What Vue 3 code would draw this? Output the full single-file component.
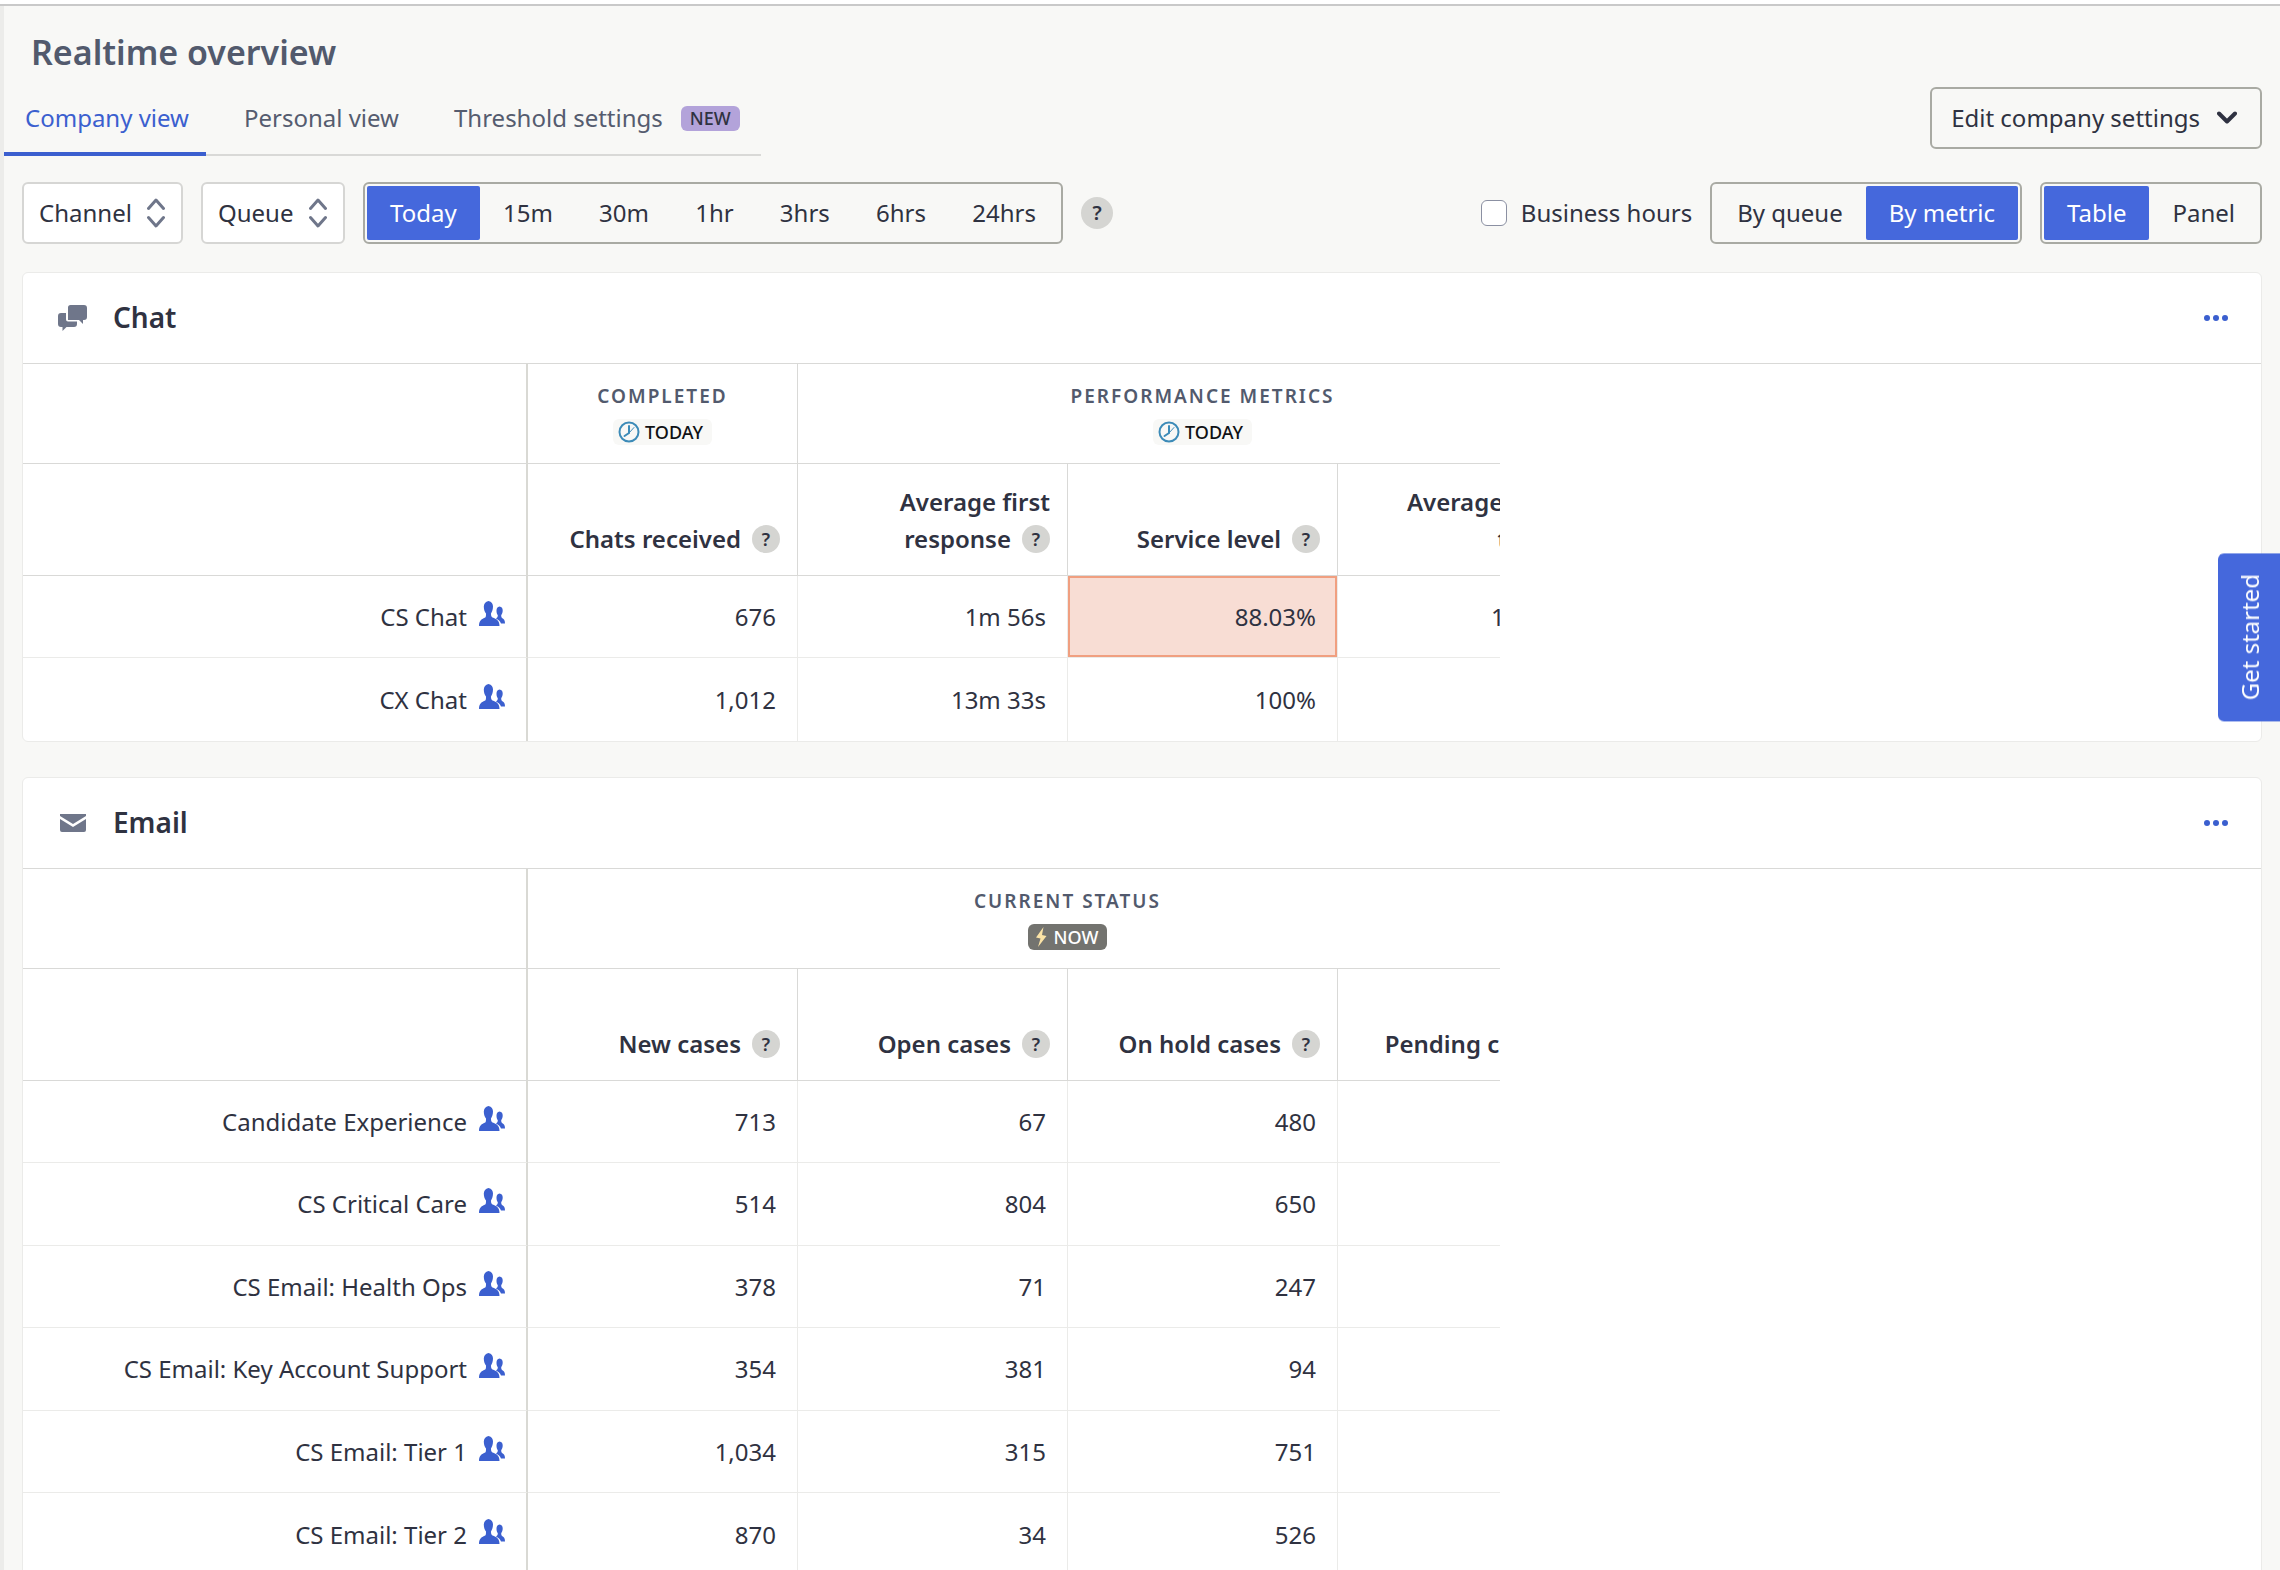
<script setup>
import { ref } from 'vue'

const tab = ref('company')
const ranges = ['Today', '15m', '30m', '1hr', '3hrs', '6hrs', '24hrs']
const range = ref('Today')
const grouping = ref('By metric')
const layout = ref('Table')
const businessHours = ref(false)

const sections = [
  {
    title: 'Chat',
    icon: 'chat',
    groups: [
      { label: 'Completed', span: 1, period: 'today' },
      { label: 'Performance metrics', span: 3, period: 'today' },
    ],
    metrics: ['Chats received', 'Average first response', 'Service level', 'Average handle time'],
    rows: [
      { queue: 'CS Chat', values: ['676', '1m 56s', '88.03%', '12m 24s'], alert: 2 },
      { queue: 'CX Chat', values: ['1,012', '13m 33s', '100%', ''] },
    ],
  },
  {
    title: 'Email',
    icon: 'email',
    groups: [{ label: 'Current status', span: 4, period: 'now' }],
    metrics: ['New cases', 'Open cases', 'On hold cases', 'Pending cases'],
    rows: [
      { queue: 'Candidate Experience', values: ['713', '67', '480', ''] },
      { queue: 'CS Critical Care', values: ['514', '804', '650', ''] },
      { queue: 'CS Email: Health Ops', values: ['378', '71', '247', ''] },
      { queue: 'CS Email: Key Account Support', values: ['354', '381', '94', ''] },
      { queue: 'CS Email: Tier 1', values: ['1,034', '315', '751', ''] },
      { queue: 'CS Email: Tier 2', values: ['870', '34', '526', ''] },
    ],
  },
]

const leadingWords = (text) => text.split(' ').slice(0, -1).join(' ')
const lastWord = (text) => text.split(' ').pop()
</script>

<template>
  <div class="app">
    <div class="topbar"></div>
    <main class="page">
      <header class="head">
        <div class="head-left">
          <h1>Realtime overview</h1>
          <nav class="tabs">
            <a href="#company" :class="{ active: tab === 'company' }" @click.prevent="tab = 'company'">Company view</a>
            <a href="#personal" :class="{ active: tab === 'personal' }" @click.prevent="tab = 'personal'">Personal view</a>
            <a href="#threshold" :class="{ active: tab === 'threshold' }" @click.prevent="tab = 'threshold'">Threshold settings <span class="new">NEW</span></a>
          </nav>
        </div>
        <button type="button" class="edit">
          Edit company settings
          <svg width="20" height="14" viewBox="0 0 20 14" aria-hidden="true"><path d="M2 2.5l8 8 8-8" fill="none" stroke="#2f3241" stroke-width="4" stroke-linecap="round" stroke-linejoin="round" /></svg>
        </button>
      </header>

      <div class="toolbar">
        <div v-for="name in ['Channel', 'Queue']" :key="name" class="picker">
          <select :aria-label="name"><option>{{ name }}</option></select>
          <svg width="18" height="30" viewBox="0 0 18 30" aria-hidden="true"><path d="M1.500 10.500L9 2l7.500 8.500M1.500 19.500L9 28l7.500-8.500" fill="none" stroke="#6f768a" stroke-width="3" stroke-linecap="round" stroke-linejoin="round" /></svg>
        </div>
        <div class="segment ranges" role="group" aria-label="Time range">
          <button v-for="r in ranges" :key="r" type="button" :class="{ on: range === r }" :aria-pressed="range === r" @click="range = r">{{ r }}</button>
        </div>
        <button type="button" class="help large" aria-label="About time ranges">?</button>
        <label class="hours"><input v-model="businessHours" type="checkbox" />Business hours</label>
        <div class="segment" role="group" aria-label="Grouping">
          <button v-for="g in ['By queue', 'By metric']" :key="g" type="button" :class="{ on: grouping === g }" :aria-pressed="grouping === g" @click="grouping = g">{{ g }}</button>
        </div>
        <div class="segment" role="group" aria-label="Layout">
          <button v-for="l in ['Table', 'Panel']" :key="l" type="button" :class="{ on: layout === l }" :aria-pressed="layout === l" @click="layout = l">{{ l }}</button>
        </div>
      </div>

      <section v-for="s in sections" :key="s.title" class="card">
        <div class="card-head">
          <svg v-if="s.icon === 'chat'" width="30" height="26" viewBox="0 0 30 26" aria-hidden="true">
            <path d="M3 8h5v6.500a2 2 0 0 0 2 2h9v2.500a3 3 0 0 1-3 3H8.500L4.500 26v-4H3a3 3 0 0 1-3-3v-8a3 3 0 0 1 3-3z" fill="#6f768a" />
            <path d="M12.500 0h13.500a3 3 0 0 1 3 3v9a3 3 0 0 1-3 3h-1v4l-4-4H10V2.500a2.500 2.500 0 0 1 2.500-2.500z" fill="#6f768a" />
          </svg>
          <svg v-else width="30" height="26" viewBox="0 0 30 26" aria-hidden="true">
            <path d="M2 4h26v2l-13 8L2 6z" fill="#6f768a" />
            <path d="M2 9l13 8 13-8v11a2 2 0 0 1-2 2H4a2 2 0 0 1-2-2z" fill="#6f768a" />
          </svg>
          <h2>{{ s.title }}</h2>
          <button type="button" class="more" :aria-label="s.title + ' options'">
            <svg width="24" height="6" viewBox="0 0 24 6" aria-hidden="true"><g fill="#3b5fcf"><circle cx="3" cy="3" r="3" /><circle cx="12" cy="3" r="3" /><circle cx="21" cy="3" r="3" /></g></svg>
          </button>
        </div>
        <div class="scroller">
          <table>
            <colgroup>
              <col class="col-queue" />
              <col v-for="m in s.metrics" :key="m" class="col-metric" />
            </colgroup>
            <thead>
              <tr class="groups">
                <td></td>
                <th v-for="g in s.groups" :key="g.label" :colspan="g.span" scope="colgroup">
                  <div class="group">
                    <span class="group-label">{{ g.label }}</span>
                    <span v-if="g.period === 'today'" class="period today">
                      <svg width="22" height="22" viewBox="0 0 22 22" aria-hidden="true"><g fill="none" stroke="#3d8bb8" stroke-linecap="round"><circle cx="11" cy="11" r="9.500" stroke-width="2" /><path d="M11 5v7l-4.500 3" stroke-width="2" /><path d="M11 12l5-5.500" stroke-width="1" /></g></svg>
                      TODAY
                    </span>
                    <span v-else class="period now">
                      <svg width="12" height="20" viewBox="0 0 12 20" aria-hidden="true"><path d="M8.500 0L1 10.500l4.500 1L3 20l8.500-11L7 8z" fill="#fbe3a6" /></svg>
                      NOW
                    </span>
                  </div>
                </th>
              </tr>
              <tr class="metrics">
                <td></td>
                <th v-for="m in s.metrics" :key="m" scope="col">
                  {{ leadingWords(m) }}
                  <span class="tail">{{ lastWord(m) }}<button type="button" class="help" :aria-label="'About ' + m">?</button></span>
                </th>
              </tr>
            </thead>
            <tbody>
              <tr v-for="row in s.rows" :key="row.queue">
                <th scope="row">
                  <div class="queue">
                    {{ row.queue }}
                    <svg width="26" height="26" viewBox="0 0 26 26" aria-hidden="true">
                      <path d="M9.500 0c3.200.8 4.500 3 4.500 5.500 0 3.500-1.200 5.500-2 7 0 2 .2 3 1.500 4 4 1.500 7 2.800 7 8.500H0c0-5.700 2.800-7 6.300-8.500C7 15.500 7 14.500 7 12.500c-1.200-1.500-2.200-3.500-2.200-7C4.800 3 6.500.8 9.500 0z" fill="#3b5fcf" />
                      <path d="M20.500 5.500c2.300.3 3.200 2 3.200 4 0 2.200-.8 3.500-1.500 4.700 0 1.500.3 2.300 1.200 3 1.600 1 2.600 2 2.600 5.300h-4c-1-2.700-2.600-3.800-5-5 1.300-.8 1.800-1.600 1.800-3.200-.9-1.200-1.300-2.600-1.300-4.800 0-2 1-3.700 3-4z" fill="#3b5fcf" />
                    </svg>
                  </div>
                </th>
                <td v-for="(v, i) in row.values" :key="i" :class="{ alert: row.alert === i }">{{ v }}</td>
              </tr>
            </tbody>
          </table>
        </div>
      </section>
    </main>
    <button type="button" class="started">Get started</button>
  </div>
</template>

<style>
body {
  background: #f8f8f6;
}
</style>

<style scoped>
.app {
  display: flex;
  flex-direction: column;
  height: 100vh;
  overflow: hidden;
  font-family: "Noto Sans", "Open Sans", sans-serif;
  font-size: 24px;
  line-height: 36px;
  color: #2f3241;
}
.app * {
  box-sizing: border-box;
}
button,
select {
  margin: 0;
  padding: 0;
  border: 0;
  background: none;
  font: inherit;
  color: inherit;
}
svg {
  display: block;
  flex: none;
}
.topbar {
  flex: none;
  height: 6px;
  background: #fff;
  border-bottom: 2px solid #c9c9c9;
}
.page {
  flex: 1;
  border-left: 4px solid #ececea;
}
.head {
  display: flex;
  justify-content: space-between;
  align-items: flex-end;
  padding-right: 18px;
}
h1 {
  margin: 0;
  padding: 22px 0 0 27px;
  font-size: 34px;
  line-height: 48px;
  font-weight: 600;
  color: #525a6d;
}
.tabs {
  display: flex;
  margin-top: 18px;
  padding-right: 4px;
  height: 62px;
  box-shadow: inset 0 -2px #d9d9d7;
}
.tabs a {
  display: flex;
  align-items: center;
  padding: 0 17px 10px 21px;
  margin-right: 17px;
  text-decoration: none;
  color: #555c6f;
  border-bottom: 4px solid transparent;
}
.tabs a:last-child {
  margin-right: 0;
}
.tabs a.active {
  color: #3b5fcf;
  border-color: #3b5fcf;
}
.new {
  margin-left: 18px;
  padding: 0 9px;
  border-radius: 6px;
  background: #b3a3da;
  font-size: 18px;
  line-height: 25px;
  font-weight: 500;
  color: #2f3241;
}
.edit {
  display: flex;
  align-items: center;
  gap: 17px;
  height: 62px;
  margin-bottom: 7px;
  padding: 0 23px 0 19px;
  border: 2px solid #a9aaa3;
  border-radius: 6px;
}
.toolbar {
  display: flex;
  align-items: center;
  gap: 18px;
  padding: 26px 18px 28px;
}
.picker {
  display: grid;
  align-items: center;
  justify-items: end;
}
.picker select {
  grid-area: 1 / 1;
  appearance: none;
  height: 62px;
  padding: 0 49px 0 15px;
  border: 2px solid #d6d6d4;
  border-radius: 6px;
  background: #fff;
}
.picker svg {
  grid-area: 1 / 1;
  margin-right: 18px;
  pointer-events: none;
}
.segment {
  display: flex;
  height: 62px;
  padding: 2px;
  border: 2px solid #a9aaa3;
  border-radius: 6px;
}
.segment button {
  flex: 1 1 auto;
  padding: 0 23px;
  border-radius: 2px;
}
.segment button.on {
  background: #4568dc;
  color: #fff;
}
.ranges {
  width: 700px;
}
.help {
  width: 28px;
  height: 28px;
  border-radius: 50%;
  background: #d5d5d2;
  font-size: 18px;
  line-height: 28px;
  font-weight: 600;
  text-align: center;
}
.help.large {
  width: 32px;
  height: 32px;
  font-size: 20px;
  line-height: 32px;
}
.hours {
  display: flex;
  align-items: center;
  gap: 14px;
  margin-left: auto;
}
.hours input {
  appearance: none;
  width: 26px;
  height: 26px;
  margin: 0;
  border: 1px solid #8b90a2;
  border-radius: 6px;
  background: #fff;
}
.card {
  margin: 0 18px 35px;
  border: 1px solid #ebebe9;
  border-radius: 6px;
  background: #fff;
}
.card-head {
  display: flex;
  align-items: center;
  height: 91px;
  padding: 0 33px 0 35px;
  border-bottom: 1px solid #d9d9d7;
}
h2 {
  margin: 0 auto 0 25px;
  padding-bottom: 2px;
  font-size: 28px;
  font-weight: 600;
}
.scroller {
  width: 66%;
  overflow: hidden;
}
table {
  width: 1585px;
  table-layout: fixed;
  border-collapse: separate;
  border-spacing: 0;
}
.col-queue {
  width: 505px;
}
.col-metric {
  width: 270px;
}
th,
td {
  height: 82px;
  padding: 0 21px 0 24px;
  border-right: 1px solid #ebebe9;
  border-bottom: 1px solid #ebebe9;
  text-align: right;
  font-weight: 400;
}
tbody tr:nth-child(even) > * {
  height: 83px;
}
tr > :first-child {
  border-right: 2px solid #d9d9d4;
}
thead th,
thead td {
  border-color: #d9d9d7;
}
tbody tr:last-child > * {
  border-bottom: 0;
}
.groups > * {
  height: 100px;
}
.groups th {
  padding: 0;
}
.group {
  display: flex;
  flex-direction: column;
  align-items: center;
  gap: 9px;
}
.group-label {
  font-size: 19px;
  line-height: 28px;
  font-weight: 600;
  letter-spacing: 2px;
  text-transform: uppercase;
  color: #525a6d;
}
.period {
  display: flex;
  align-items: center;
  height: 26px;
  border-radius: 6px;
  font-size: 18px;
  line-height: 26px;
  font-weight: 500;
}
.today {
  gap: 5px;
  padding: 0 9px 0 5px;
  background: #f8f8f6;
  color: #101114;
}
.now {
  gap: 7px;
  padding: 0 9px 0 7px;
  background: #73736f;
  color: #fff;
}
.metrics > * {
  height: 112px;
  padding: 0 17px 18px 24px;
  vertical-align: bottom;
  line-height: 37px;
  font-weight: 600;
}
.tail {
  white-space: nowrap;
}
.tail .help {
  margin-left: 11px;
  vertical-align: 2px;
}
.queue {
  display: flex;
  justify-content: flex-end;
  align-items: center;
  gap: 12px;
}
.queue svg {
  margin-bottom: 6px;
}
td.alert {
  background: #f8ddd4;
  box-shadow: inset 0 0 0 2px #f09f80;
}
.started {
  position: fixed;
  right: 0;
  top: 553px;
  padding: 21px 14px 21px 12px;
  border-radius: 0 6px 6px 0;
  background: #4568dc;
  color: #fff;
  writing-mode: vertical-rl;
  transform: rotate(180deg);
}
</style>
